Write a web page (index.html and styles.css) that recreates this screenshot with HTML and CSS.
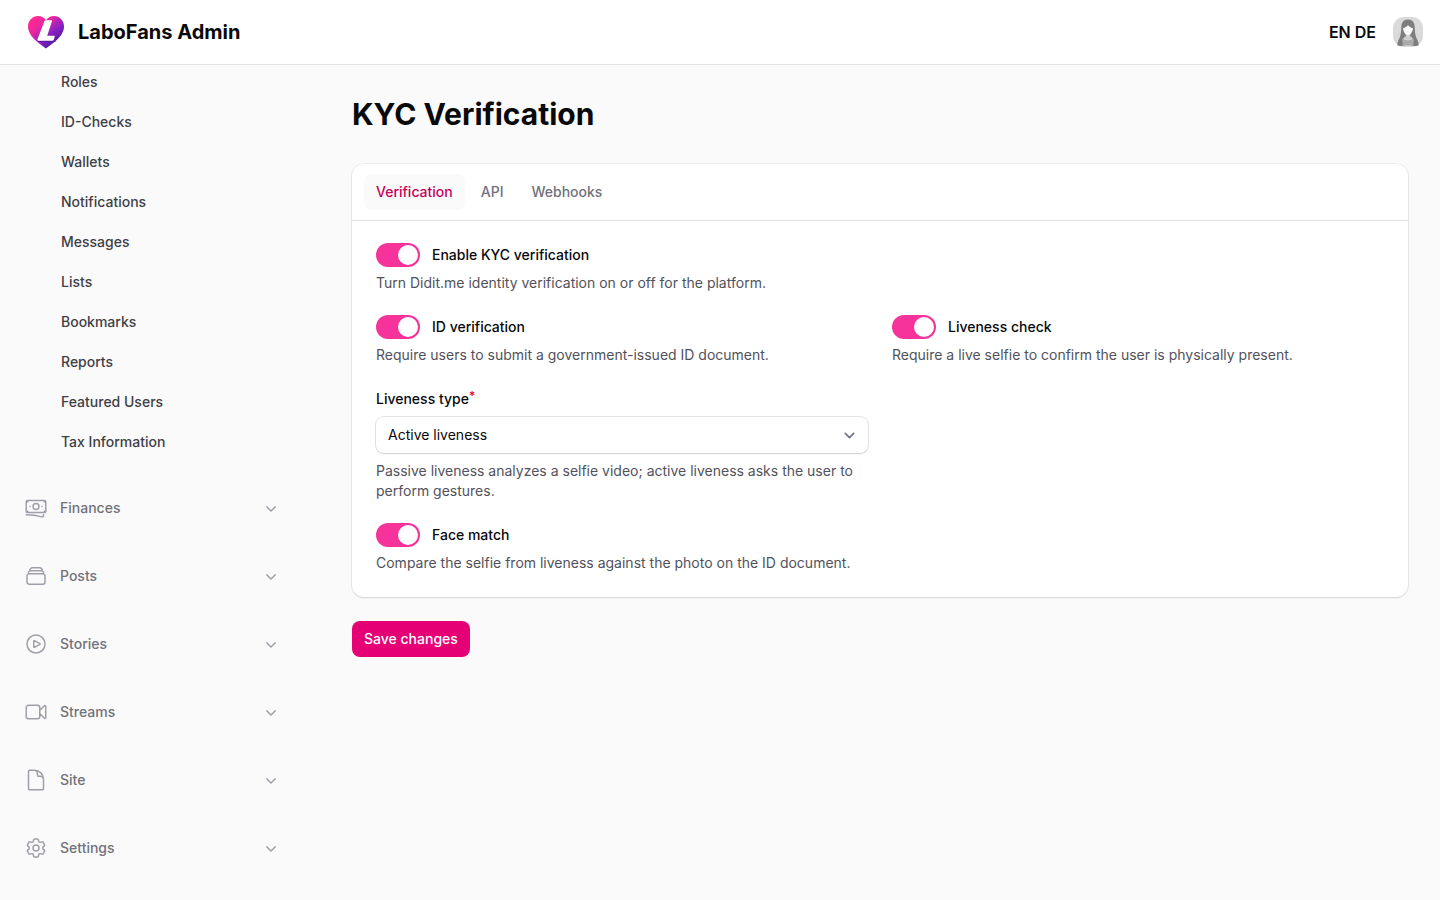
FILE: index.html
```html
<!DOCTYPE html>
<html lang="en">
<head>
<meta charset="utf-8">
<meta name="viewport" content="width=device-width, initial-scale=1">
<title>KYC Verification - LaboFans Admin</title>
<link rel="stylesheet" href="styles.css">
</head>
<body>
<svg class="defs" aria-hidden="true">
  <symbol id="chevron" viewBox="0 0 20 20"><path fill="currentColor" fill-rule="evenodd" d="M5.22 8.22a.75.75 0 0 1 1.06 0L10 11.94l3.72-3.72a.75.75 0 1 1 1.06 1.06l-4.25 4.25a.75.75 0 0 1-1.06 0L5.22 9.28a.75.75 0 0 1 0-1.06Z"/></symbol>
</svg>
<header class="topbar">
  <a class="brand" href="#">
    <svg class="brand-logo" viewBox="0 0 40 34" aria-hidden="true">
      <defs>
        <linearGradient id="heart" x1="0.1" y1="0.15" x2="0.75" y2="0.9">
          <stop offset="0" stop-color="#ff2a94"/>
          <stop offset="0.3" stop-color="#e8279e"/>
          <stop offset="0.65" stop-color="#8a20c4"/>
          <stop offset="1" stop-color="#4c1a9c"/>
        </linearGradient>
      </defs>
      <path fill="url(#heart)" d="M20 33.500C15 29.500 2 22 2 11.500C2 5.500 6.500 1 12 1c3.500 0 6.400 1.700 8 4.500C21.600 2.700 24.500 1 28 1c5.500 0 10 4.500 10 10.500C38 22 25 29.500 20 33.500Z"/>
      <path fill="#3f1686" fill-opacity="0.5" d="M12 26h17l1.500-4 .5.500-1.500 4.500H12.500Z"/>
      <path fill="#fff" d="M19.300 5.200h6c.6 0 .9.400.7 1l-4.800 14.600h6.800c.6 0 .9.400.7 1l-1 3c-.2.600-.7 1-1.300 1H12.300c-.7 0-1.100-.5-.9-1.200l7-18.400c.1-.6.400-1 .9-1Z"/>
    </svg>
    <span>LaboFans Admin</span>
  </a>
  <div class="topbar-end">
    <nav class="languages" aria-label="Language"><a href="#">EN</a> <a href="#">DE</a></nav>
    <button class="avatar" type="button" aria-label="User menu">
      <svg viewBox="0 0 32 32" aria-hidden="true">
        <rect x="1" y="1" width="30" height="30" rx="11" fill="#dadada"/>
        <path fill="#7d7d7d" d="M16 3.500c-4.500 0-6.500 3-6.700 7.500-.1 4-.3 8-2 11.500C6 25 5 27.500 5.500 29.500c3 .8 6 .3 8-.5h5c2 .8 5 1.300 8 .5.5-2-.5-4.500-1.800-7-1.700-3.500-1.900-7.500-2-11.500C22.500 6.500 20.500 3.500 16 3.500Z"/>
        <path fill="#ababab" d="M12.500 20.500 10 23.500c.5 2 .7 4 .7 6h10.600c0-2 .2-4 .7-6l-2.500-3Z"/>
        <path fill="#d0d0d0" d="M13.800 17h4.400v3.500l2.400 2c-1 2.600-8.200 2.600-9.200 0l2.400-2Z"/>
        <path fill="#f7f7f7" d="M16 9c-1.200 1.800-3 2.800-4.900 3.200.2 3.800 2.300 6.800 4.900 6.800s4.700-3 4.900-6.800C19 11.800 17.200 10.800 16 9Z"/>
      </svg>
    </button>
  </div>
</header>
<div class="layout">
  <aside class="sidebar">
    <nav class="sidebar-nav" aria-label="Main">
      <ul class="nav-items">
        <li><a href="#">Roles</a></li>
        <li><a href="#">ID-Checks</a></li>
        <li><a href="#">Wallets</a></li>
        <li><a href="#">Notifications</a></li>
        <li><a href="#">Messages</a></li>
        <li><a href="#">Lists</a></li>
        <li><a href="#">Bookmarks</a></li>
        <li><a href="#">Reports</a></li>
        <li><a href="#">Featured Users</a></li>
        <li><a href="#">Tax Information</a></li>
      </ul>
      <button class="nav-group" type="button">
        <svg class="nav-icon" viewBox="0 0 24 24" aria-hidden="true"><path d="M2.250 18.750a60.070 60.070 0 0 1 15.797 2.101c.727.198 1.453-.342 1.453-1.096V18.750M3.750 4.500v.75A.75.75 0 0 1 3 6h-.75m0 0v-.375c0-.621.504-1.125 1.125-1.125H20.250M2.250 6v9m18-10.500v.75c0 .414.336.75.75.75h.75m-1.500-1.500h.375c.621 0 1.125.504 1.125 1.125v9.750c0 .621-.504 1.125-1.125 1.125h-.375m1.500-1.500H21a.75.75 0 0 0-.75.75v.75m0 0H3.750m0 0h-.375a1.125 1.125 0 0 1-1.125-1.125V15m1.500 1.500v-.75A.75.75 0 0 0 3 15h-.75M15 10.500a3 3 0 1 1-6 0 3 3 0 0 1 6 0Zm3 0h.008v.008H18V10.500Zm-12 0h.008v.008H6V10.500Z"/></svg>
        <span>Finances</span><svg class="chevron" aria-hidden="true"><use href="#chevron"/></svg>
      </button>
      <button class="nav-group" type="button">
        <svg class="nav-icon" viewBox="0 0 24 24" aria-hidden="true"><path d="M6 6.878V6a2.250 2.250 0 0 1 2.250-2.250h7.500A2.250 2.250 0 0 1 18 6v.878m-12 0c.235-.083.487-.128.75-.128h10.500c.263 0 .515.045.75.128m-12 0A2.250 2.250 0 0 0 4.500 9v.878m13.500-3A2.250 2.250 0 0 1 19.500 9v.878m0 0a2.246 2.246 0 0 0-.75-.128H5.250c-.263 0-.515.045-.75.128m15 0A2.250 2.250 0 0 1 21 12v6a2.250 2.250 0 0 1-2.250 2.250H5.250A2.250 2.250 0 0 1 3 18v-6c0-.98.626-1.813 1.500-2.122"/></svg>
        <span>Posts</span><svg class="chevron" aria-hidden="true"><use href="#chevron"/></svg>
      </button>
      <button class="nav-group" type="button">
        <svg class="nav-icon" viewBox="0 0 24 24" aria-hidden="true"><path d="M21 12a9 9 0 1 1-18 0 9 9 0 0 1 18 0Z"/><path d="M15.910 11.672a.375.375 0 0 1 0 .656l-5.603 3.113a.375.375 0 0 1-.557-.328V8.887c0-.286.307-.466.557-.327l5.603 3.112Z"/></svg>
        <span>Stories</span><svg class="chevron" aria-hidden="true"><use href="#chevron"/></svg>
      </button>
      <button class="nav-group" type="button">
        <svg class="nav-icon" viewBox="0 0 24 24" aria-hidden="true"><path d="m15.750 10.500 4.720-4.720a.75.75 0 0 1 1.280.53v11.380a.75.75 0 0 1-1.280.53l-4.720-4.720M4.500 18.750h9a2.250 2.250 0 0 0 2.250-2.250v-9a2.250 2.250 0 0 0-2.250-2.250h-9A2.250 2.250 0 0 0 2.250 7.500v9a2.250 2.250 0 0 0 2.250 2.250Z"/></svg>
        <span>Streams</span><svg class="chevron" aria-hidden="true"><use href="#chevron"/></svg>
      </button>
      <button class="nav-group" type="button">
        <svg class="nav-icon" viewBox="0 0 24 24" aria-hidden="true"><path d="M19.500 14.250v-2.625a3.375 3.375 0 0 0-3.375-3.375h-1.500A1.125 1.125 0 0 1 13.500 7.125v-1.500a3.375 3.375 0 0 0-3.375-3.375H8.250m2.250 0H5.625c-.621 0-1.125.504-1.125 1.125v17.250c0 .621.504 1.125 1.125 1.125h12.750c.621 0 1.125-.504 1.125-1.125V11.250a9 9 0 0 0-9-9Z"/></svg>
        <span>Site</span><svg class="chevron" aria-hidden="true"><use href="#chevron"/></svg>
      </button>
      <button class="nav-group" type="button">
        <svg class="nav-icon" viewBox="0 0 24 24" aria-hidden="true"><path d="M9.594 3.940c.09-.542.56-.94 1.110-.94h2.593c.55 0 1.020.398 1.110.94l.213 1.281c.063.374.313.686.645.87.074.04.147.083.22.127.325.196.72.257 1.075.124l1.217-.456a1.125 1.125 0 0 1 1.370.49l1.296 2.247a1.125 1.125 0 0 1-.26 1.431l-1.003.827c-.293.241-.438.613-.43.992a7.723 7.723 0 0 1 0 .255c-.008.378.137.75.43.991l1.004.827c.424.35.534.955.26 1.430l-1.298 2.247a1.125 1.125 0 0 1-1.369.491l-1.217-.456c-.355-.133-.75-.072-1.076.124a6.470 6.470 0 0 1-.22.128c-.331.183-.581.495-.644.869l-.213 1.281c-.09.543-.56.94-1.110.94h-2.594c-.55 0-1.019-.398-1.110-.94l-.213-1.281c-.062-.374-.312-.686-.644-.87a6.520 6.520 0 0 1-.22-.127c-.325-.196-.72-.257-1.076-.124l-1.217.456a1.125 1.125 0 0 1-1.369-.49l-1.297-2.247a1.125 1.125 0 0 1 .26-1.431l1.004-.827c.292-.24.437-.613.43-.991a6.932 6.932 0 0 1 0-.255c.007-.38-.138-.751-.43-.992l-1.004-.827a1.125 1.125 0 0 1-.26-1.430l1.297-2.247a1.125 1.125 0 0 1 1.370-.491l1.216.456c.356.133.751.072 1.076-.124.072-.044.146-.086.22-.128.332-.183.582-.495.644-.869l.214-1.280Z"/><path d="M15 12a3 3 0 1 1-6 0 3 3 0 0 1 6 0Z"/></svg>
        <span>Settings</span><svg class="chevron" aria-hidden="true"><use href="#chevron"/></svg>
      </button>
    </nav>
  </aside>
  <main class="main">
    <h1>KYC Verification</h1>
    <form class="form">
      <section class="card">
        <div class="tabs" role="tablist">
          <button class="tab tab-active" type="button" role="tab" aria-selected="true">Verification</button>
          <button class="tab" type="button" role="tab" aria-selected="false">API</button>
          <button class="tab" type="button" role="tab" aria-selected="false">Webhooks</button>
        </div>
        <div class="fields">
          <div class="field field-full">
            <label class="toggle-label"><input class="toggle" type="checkbox" role="switch" checked><span>Enable KYC verification</span></label>
            <p class="hint">Turn Didit.me identity verification on or off for the platform.</p>
          </div>
          <div class="field">
            <label class="toggle-label"><input class="toggle" type="checkbox" role="switch" checked><span>ID verification</span></label>
            <p class="hint">Require users to submit a government-issued ID document.</p>
          </div>
          <div class="field">
            <label class="toggle-label"><input class="toggle" type="checkbox" role="switch" checked><span>Liveness check</span></label>
            <p class="hint">Require a live selfie to confirm the user is physically present.</p>
          </div>
          <div class="field field-start">
            <label for="liveness-type">Liveness type<sup>*</sup></label>
            <div class="select-wrap">
              <select id="liveness-type" required>
                <option>Active liveness</option>
                <option>Passive liveness</option>
              </select>
              <svg class="select-chevron" viewBox="0 0 20 20" aria-hidden="true"><path d="m6 8 4 4 4-4"/></svg>
            </div>
            <p class="hint">Passive liveness analyzes a selfie video; active liveness asks the user to perform gestures.</p>
          </div>
          <div class="field field-start">
            <label class="toggle-label"><input class="toggle" type="checkbox" role="switch" checked><span>Face match</span></label>
            <p class="hint">Compare the selfie from liveness against the photo on the ID document.</p>
          </div>
        </div>
      </section>
      <button class="save" type="submit">Save changes</button>
    </form>
  </main>
</div>
</body>
</html>
```

FILE: styles.css
```css
*, *::before, *::after { box-sizing: border-box; }

body {
  margin: 0;
  min-height: 100vh;
  background: #fafafa;
  color: #09090b;
  font-family: Inter, "Liberation Sans", sans-serif;
  font-size: 14px;
  line-height: 20px;
}

button, select { font: inherit; color: inherit; }
button { border: 0; background: none; cursor: pointer; }
a { color: inherit; text-decoration: none; }
h1, p, ul { margin: 0; padding: 0; }
ul { list-style: none; }
svg { display: block; flex-shrink: 0; }
.defs { display: none; }

.topbar {
  position: sticky;
  top: 0;
  z-index: 1;
  display: flex;
  align-items: center;
  justify-content: space-between;
  height: 64px;
  padding: 0 16px 0 26px;
  background: #fff;
  box-shadow: 0 1px 0 #e4e4e7;
}

.brand {
  display: flex;
  align-items: center;
  gap: 12px;
  font-size: 20px;
  font-weight: 700;
  line-height: 28px;
}

.brand-logo { width: 40px; height: 34px; }

.topbar-end { display: flex; align-items: center; gap: 16px; }
.languages { font-size: 16px; font-weight: 600; line-height: 24px; }
.avatar { padding: 0; border-radius: 50%; }
.avatar svg { width: 32px; height: 32px; }

.layout { display: flex; }

.sidebar { flex: 0 0 320px; padding: 0 39px 32px 24px; }
.sidebar-nav { display: flex; flex-direction: column; gap: 28px; }
.nav-items { display: flex; flex-direction: column; gap: 4px; }

.nav-items a {
  display: block;
  padding: 8px 0 8px 37px;
  color: #3f3f46;
  font-weight: 500;
}

.nav-group {
  display: flex;
  align-items: center;
  gap: 12px;
  padding: 8px 0;
  color: #71717b;
  font-weight: 500;
  text-align: left;
}

.nav-group span { flex: 1; }

.nav-icon {
  width: 24px;
  height: 24px;
  fill: none;
  stroke: #9f9fa9;
  stroke-width: 1.5;
  stroke-linecap: round;
  stroke-linejoin: round;
}

.chevron { width: 20px; height: 20px; color: #9f9fa9; }

.main { flex: 1; min-width: 0; padding: 32px; }

h1 { font-size: 30px; font-weight: 700; line-height: 36px; }

.form {
  display: flex;
  flex-direction: column;
  align-items: flex-start;
  gap: 24px;
  margin-top: 32px;
}

.card {
  width: 100%;
  border-radius: 12px;
  background: #fff;
  box-shadow: 0 0 0 1px #09090b0d, 0 1px 2px #0000001a;
}

.tabs {
  display: flex;
  gap: 4px;
  padding: 10px 12px;
  border-bottom: 1px solid #e4e4e7;
}

.tab {
  padding: 8px 12px;
  border-radius: 8px;
  color: #71717b;
  font-weight: 500;
}

.tab-active { background: #fafafa; color: #c6005c; }

.fields {
  display: grid;
  grid-template-columns: repeat(2, minmax(0, 1fr));
  gap: 24px;
  padding: 24px;
}

.field { display: flex; flex-direction: column; gap: 8px; }
.field-full { grid-column: 1 / -1; }
.field-start { grid-column: 1; }
.field label { font-weight: 500; }

.toggle-label {
  display: flex;
  align-items: center;
  gap: 12px;
  height: 20px;
}

.toggle {
  appearance: none;
  display: flex;
  flex-shrink: 0;
  width: 44px;
  height: 24px;
  margin: 0;
  padding: 2px;
  border-radius: 12px;
  background: #d4d4d8;
  cursor: pointer;
}

.toggle::before {
  content: "";
  width: 20px;
  height: 20px;
  border-radius: 50%;
  background: #fff;
}

.toggle:checked { justify-content: flex-end; background: #f6339a; }

.hint { color: #52525c; }

sup {
  color: #e7000b;
  font-size: 12px;
  line-height: 0;
  vertical-align: 4px;
}

.select-wrap { display: grid; align-items: center; }
.select-wrap > * { grid-area: 1 / 1; }

select {
  appearance: none;
  width: 100%;
  height: 36px;
  padding: 0 36px 0 12px;
  border: 0;
  border-radius: 8px;
  background: #fff;
  box-shadow: 0 0 0 1px #09090b1a, 0 1px 2px #0000001a;
}

.select-chevron {
  justify-self: end;
  width: 21px;
  height: 21px;
  margin-right: 8px;
  fill: none;
  stroke: #6b7280;
  stroke-width: 1.5;
  stroke-linecap: round;
  stroke-linejoin: round;
  pointer-events: none;
}

.save {
  padding: 8px 12px;
  border-radius: 8px;
  background: #e60076;
  color: #fff;
  font-weight: 500;
}
```
